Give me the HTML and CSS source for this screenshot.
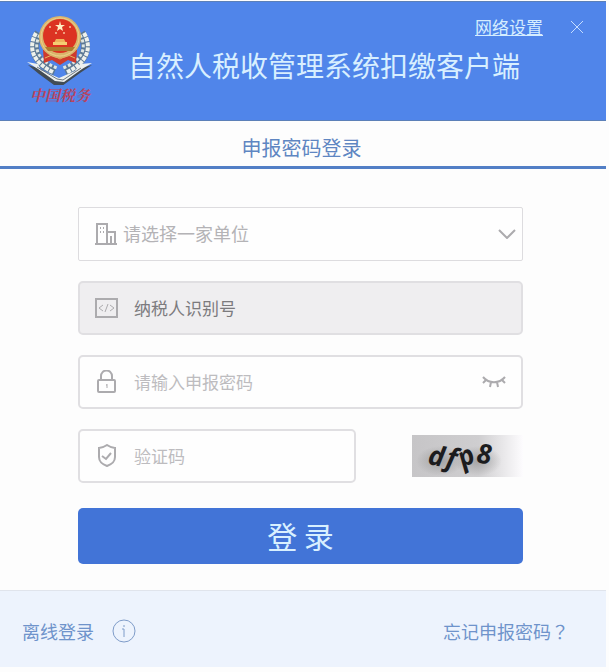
FILE: index.html
```
<!DOCTYPE html>
<html lang="zh-Hans">
<head>
  <meta charset="UTF-8" />
  <meta name="viewport" content="width=device-width, initial-scale=1" />
  <title>自然人税收管理系统扣缴客户端</title>
  <link rel="stylesheet" href="styles.css">
</head>
<body>

<div class="window">
  <header class="header">
    <div class="logo">
      <svg class="emblem" viewBox="0 0 70 72" aria-hidden="true">
        <!-- wheat wreath -->
        <g fill="none" stroke="#5b7894" stroke-width="9">
          <path d="M13 20C3 36 10 50 29 58"/>
          <path d="M55 20C65 36 58 50 39 58"/>
        </g>
        <g fill="none" stroke="#eef1ec" stroke-width="4" stroke-dasharray="4 1">
          <path d="M10 20C1 36 8 50 27 59"/>
          <path d="M58 20C67 36 60 50 41 59"/>
        </g>
        <g fill="none" stroke="#dfe6e2" stroke-width="3" stroke-dasharray="3 2">
          <path d="M14 22C6 36 13 48 31 55"/>
          <path d="M54 22C62 36 55 48 37 55"/>
        </g>
        <!-- ribbon -->
        <path d="M17 37h34l-1 13-8-3-8 5-8-5-8 3z" fill="#cf3a2c"/>
        <path d="M19 45l7-3 8 4 8-4 7 3" fill="none" stroke="#e2b660" stroke-width="1"/>
        <!-- open book -->
        <path d="M2 52l10 3 22 13 20-13 12-3-12 8-18 13-8-1-15-11z" fill="#424c55"/>
        <path d="M1 49l11 2 3 6 18 8 16-7 5-7 12-1-10 6-18 13-9-1-17-12z" fill="#edf0ee"/>
        <path d="M11 54l20 12 6 1 18-12" fill="none" stroke="#6c7780" stroke-width="1"/>
        <!-- national emblem -->
        <circle cx="34" cy="24" r="21" fill="#d9b46c"/>
        <circle cx="34" cy="24" r="19" fill="none" stroke="#efd08a" stroke-width="1"/>
        <circle cx="34" cy="23" r="17" fill="#dc3322"/>
        <path d="M34 8l1 4h4l-3 2 1 4-3-2-3 2 1-4-3-2h4z" fill="#fff0c5"/>
        <g fill="#f6c39c">
          <circle cx="24" cy="14" r="1"/><circle cx="44" cy="14" r="1"/>
          <circle cx="30" cy="20" r="1"/><circle cx="38" cy="20" r="1"/>
        </g>
        <path d="M30 26h8l2 4h-12z" fill="#efb45c"/>
        <path d="M27 29h14v3H27z" fill="#f5cf72"/>
        <path d="M19 34h30l-3 4H22z" fill="#b07a2c"/>
      </svg>
      <span class="logo-text">中国税务</span>
    </div>
    <div class="header-main">
      <div class="header-tools">
        <a class="network" href="#">网络设置</a>
        <button class="close" type="button" aria-label="关闭">
          <svg viewBox="0 0 14 14" width="14" height="14"><path d="M1 1l12 12M13 1L1 13" fill="none" stroke="currentColor"/></svg>
        </button>
      </div>
      <h1>自然人税收管理系统扣缴客户端</h1>
    </div>
  </header>

  <h2 class="tab">申报密码登录</h2>

  <form class="login">
    <div class="field field-company">
      <svg class="icon" viewBox="0 0 24 24" aria-hidden="true">
        <path d="M3 22V2h10v20M13 10h8v12M1 22h22"/>
        <path d="M6 6h1M9 6h1M6 10h1M9 10h1M17 14v8" />
      </svg>
      <select aria-label="单位">
        <option>请选择一家单位</option>
      </select>
      <svg class="arrow" viewBox="0 0 18 10" aria-hidden="true"><path d="M1 1l8 8 8-8"/></svg>
    </div>

    <div class="field field-disabled">
      <svg class="icon" viewBox="0 0 24 24" aria-hidden="true">
        <path d="M1 3h21v18H1z"/>
        <path class="thin" d="M8 9l-4 3 4 3M15 9l4 3-4 3M13 8l-3 8"/>
      </svg>
      <input type="text" placeholder="纳税人识别号" aria-label="纳税人识别号" readonly>
    </div>

    <div class="field">
      <svg class="icon" viewBox="0 0 24 24" aria-hidden="true">
        <rect x="3" y="10" width="17" height="12" rx="1"/>
        <path d="M6 10V6a5 5 0 0 1 11 0v4"/>
        <path class="thin" d="M12 14v4M11 15h1"/>
      </svg>
      <input type="password" placeholder="请输入申报密码" aria-label="申报密码">
      <button class="eye" type="button" aria-label="显示密码">
        <svg viewBox="0 0 24 14" width="24" height="14"><path d="M1 2c6 7 16 7 22 0M4 5L1 8M9 7l-1 5M15 7l1 5M20 5l3 3"/></svg>
      </button>
    </div>

    <div class="code-row">
      <div class="field">
        <svg class="icon" viewBox="0 0 24 24" aria-hidden="true">
          <path d="M12 1c3 2 5 3 8 3v9c0 5-3 7-8 9-5-2-8-4-8-9V4c3 0 5-1 8-3z"/>
          <path d="M7 12l4 3 5-6"/>
        </svg>
        <input type="text" placeholder="验证码" aria-label="验证码">
      </div>
      <button class="captcha" type="button" aria-label="刷新验证码">
        <svg viewBox="0 0 111 42" width="111" height="42">
          <defs>
            <linearGradient id="fade">
              <stop offset="0" stop-color="#c6c5c7"/>
              <stop offset=".6" stop-color="#cfced0"/>
              <stop offset="1" stop-color="#fdfcfe"/>
            </linearGradient>
            <radialGradient id="shade">
              <stop offset="0" stop-color="#888" stop-opacity=".6"/>
              <stop offset="1" stop-color="#888" stop-opacity="0"/>
            </radialGradient>
          </defs>
          <rect width="111" height="42" fill="url(#fade)"/>
          <ellipse cx="28" cy="26" rx="24" ry="15" fill="url(#shade)"/>
          <ellipse cx="66" cy="26" rx="24" ry="15" fill="url(#shade)"/>
          <g class="captcha-text">
            <text transform="translate(15 29) rotate(10)">d</text>
            <text transform="translate(33 31) rotate(12)">f</text>
            <text transform="translate(51 33) rotate(-28)">p</text>
            <text transform="translate(64 28) rotate(4)">8</text>
          </g>
        </svg>
      </button>
    </div>

    <button class="submit" type="submit">登 录</button>
  </form>

  <footer class="footer">
    <a href="#">离线登录</a>
    <button class="info" type="button" aria-label="说明">
      <svg viewBox="0 0 24 24" width="24" height="24"><circle cx="12" cy="12" r="11"/><path d="M12 6v2M10 10h2v8"/></svg>
    </button>
    <a class="forgot" href="#">忘记申报密码<span class="mark" lang="zh-Hant">？</span></a>
  </footer>
</div>

</body>
</html>
```
FILE: styles.css
```
* {
  box-sizing: border-box;
}
body {
  margin: 0;
  padding: 1px 3px 0 0;
  font-family: "Noto Sans CJK SC", sans-serif;
  background: #fdfdfd;
}
a {
  color: #6f93cb;
  text-decoration: none;
}
button {
  border: none;
  padding: 0;
  background: none;
  font: inherit;
  cursor: pointer;
}
svg {
  display: block;
}
.header {
  display: flex;
  min-height: 120px;
  background: #5085ea;
  border-top: 1px solid #5c80b8;
  border-bottom: 1px solid #5c80b8;
}
.logo {
  width: 128px;
  padding: 11px 0 0 26px;
}
.emblem {
  width: 70px;
  height: 72px;
}
.logo-text {
  display: block;
  margin-left: 4px;
  font-family: "Noto Serif CJK SC", "Noto Sans CJK SC", serif;
  font-size: 15px;
  font-style: italic;
  font-weight: 700;
  line-height: 20px;
  color: #b9435f;
}
.header-main {
  flex: 1;
}
.header-tools {
  display: flex;
  justify-content: flex-end;
  align-items: center;
  gap: 27px;
  padding: 13px 22px 0 0;
}
.network {
  font-size: 17px;
  line-height: 24px;
  color: #d5edff;
  text-decoration: underline;
}
.close {
  color: #c4dcff;
}
h1 {
  margin: 6px 0 0;
  font-size: 28px;
  font-weight: 400;
  line-height: 40px;
  color: #d8efff;
}
.tab {
  margin: 0;
  padding: 8px 3px 0 0;
  border-bottom: 3px solid #527fc6;
  font-size: 20px;
  font-weight: 400;
  line-height: 37px;
  text-align: center;
  color: #5f86c2;
}
.login {
  display: flex;
  flex-direction: column;
  gap: 20px;
  padding: 38px 83px 26px 78px;
}
.field {
  display: flex;
  align-items: center;
  flex: 1 1 auto;
  height: 54px;
  padding: 0 15px;
  gap: 15px;
  background: #fefefe;
  border: 2px solid #e0dfe2;
  border-radius: 5px;
}
.field-company {
  gap: 5px;
  padding-right: 6px;
  border: 1px solid #dddcdf;
  border-radius: 2px;
}
.field-disabled {
  background: #efeef0;
}
.icon {
  flex: none;
  width: 24px;
  height: 24px;
}
.icon,
.arrow,
.eye svg {
  fill: none;
  stroke: #acabae;
  stroke-width: 2;
}
.thin {
  stroke-width: 1;
}
.arrow {
  width: 18px;
  height: 10px;
}
input,
select {
  flex: 1;
  min-width: 0;
  padding: 0 0 2px;
  border: none;
  outline: none;
  background: none;
  font: inherit;
  font-size: 17px;
  color: #777;
}
select {
  appearance: none;
  font-size: 18px;
  color: #b4b3b6;
}
input::placeholder {
  color: #bdbcbf;
}
.field-disabled input::placeholder {
  color: #7c7b7e;
}
.code-row {
  display: flex;
  align-items: center;
  gap: 56px;
}
.captcha-text {
  font-family: "Open Sans", sans-serif;
  font-size: 27px;
  font-style: italic;
  font-weight: 700;
  fill: #1c1c1e;
}
.submit {
  margin-top: 5px;
  padding-bottom: 2px;
  border-radius: 5px;
  background: #4274d7;
  font-size: 30px;
  line-height: 54px;
  color: #d8f0ff;
}
.footer {
  display: flex;
  align-items: center;
  gap: 18px;
  padding: 4px 37px 0 22px;
  min-height: 77px;
  border-top: 1px solid #e0e4ec;
  background: #edf3fd;
  font-size: 18px;
}
.info svg {
  fill: none;
  stroke: #7f9cc9;
}
.forgot {
  margin-left: auto;
}
.mark {
  font-family: "Noto Sans CJK TC", sans-serif;
}
```
